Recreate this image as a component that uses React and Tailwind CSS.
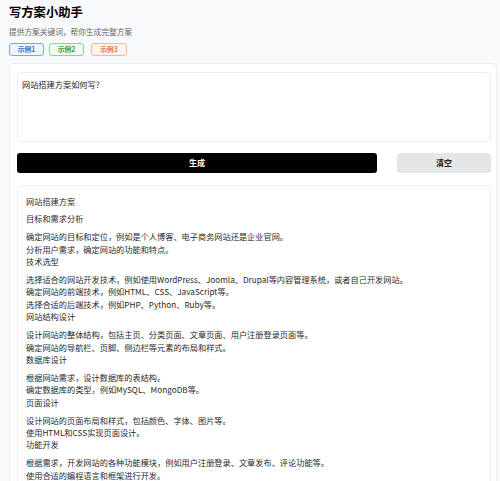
import React from "react";

const sections = [
  {
    h: "目标和需求分析",
    lines: [
      "确定网站的目标和定位，例如是个人博客、电子商务网站还是企业官网。",
      "分析用户需求，确定网站的功能和特点。",
    ],
  },
  {
    h: "技术选型",
    lines: [
      "选择适合的网站开发技术，例如使用WordPress、Joomla、Drupal等内容管理系统，或者自己开发网站。",
      "确定网站的前端技术，例如HTML、CSS、JavaScript等。",
      "选择合适的后端技术，例如PHP、Python、Ruby等。",
    ],
  },
  {
    h: "网站结构设计",
    lines: [
      "设计网站的整体结构，包括主页、分类页面、文章页面、用户注册登录页面等。",
      "确定网站的导航栏、页脚、侧边栏等元素的布局和样式。",
    ],
  },
  {
    h: "数据库设计",
    lines: [
      "根据网站需求，设计数据库的表结构。",
      "确定数据库的类型，例如MySQL、MongoDB等。",
    ],
  },
  {
    h: "页面设计",
    lines: [
      "设计网站的页面布局和样式，包括颜色、字体、图片等。",
      "使用HTML和CSS实现页面设计。",
    ],
  },
  {
    h: "功能开发",
    lines: [
      "根据需求，开发网站的各种功能模块，例如用户注册登录、文章发布、评论功能等。",
      "使用合适的编程语言和框架进行开发。",
    ],
  },
  {
    h: "测试和优化",
    lines: ["对网站进行全面测试，修复存在的问题。"],
  },
];

export default function App() {
  return (
    <div
      className="w-[500px] h-[481px] overflow-hidden bg-[#f8f9fa] text-[#222]"
      style={{ fontFamily: '"Noto Sans CJK SC", "Noto Sans", sans-serif' }}
    >
      <div className="pl-[9px] pt-[3px]">
        <h1 className="text-[12.3px] leading-[18px] font-bold text-black">写方案小助手</h1>
        <p className="mt-[5px] text-[7.7px] leading-[11px] text-[#666]">提供方案关键词，帮你生成完整方案</p>
        <div className="mt-[6px] flex gap-[5px]">
          <span className="h-[13px] w-[35px] flex items-center justify-center rounded-[3px] border border-[#7aa7e6] bg-[#eef4fd] text-[6.8px] font-bold text-[#2f6fd0]">示例1</span>
          <span className="h-[13px] w-[35px] flex items-center justify-center rounded-[3px] border border-[#8ed19b] bg-[#f0faf2] text-[6.8px] font-bold text-[#3a9a4c]">示例2</span>
          <span className="ml-[2px] h-[13px] w-[36px] flex items-center justify-center rounded-[3px] border border-[#efb79a] bg-[#fdf4ef] text-[6.8px] font-bold text-[#e0783f]">示例3</span>
        </div>
      </div>
      <div className="ml-[9px] mt-[7px] w-[488px] h-[500px] rounded-[4px] border border-[#eeeeee] bg-white pl-[7px] pr-[5px] pt-[8px]">
        <div className="h-[70px] rounded-[4px] border border-[#eeeeee] bg-white pl-[4px] pt-[5px] text-[8.2px] leading-[12px] text-[#222]">
          网站搭建方案如何写?
        </div>
        <div className="mt-[11px] flex gap-[20px]">
          <button className="h-[20px] w-[360px] rounded-[3px] bg-black text-[8px] font-bold text-white">生成</button>
          <button className="h-[20px] w-[94px] rounded-[3px] bg-[#e5e6e8] text-[8px] font-bold text-[#222]">清空</button>
        </div>
        <div className="mt-[12px] rounded-[4px] border border-[#eeeeee] bg-white pl-[8px] pt-[9px] text-[8.2px] leading-[12.4px] text-[#2a2a2a]">
          <div className="mb-[5px]">网站搭建方案</div>
          {sections.map((s) => (
            <div key={s.h}>
              <div className="mb-[5.5px]">{s.h}</div>
              {s.lines.map((l) => (
                <div key={l}>{l}</div>
              ))}
            </div>
          ))}
        </div>
      </div>
    </div>
  );
}
